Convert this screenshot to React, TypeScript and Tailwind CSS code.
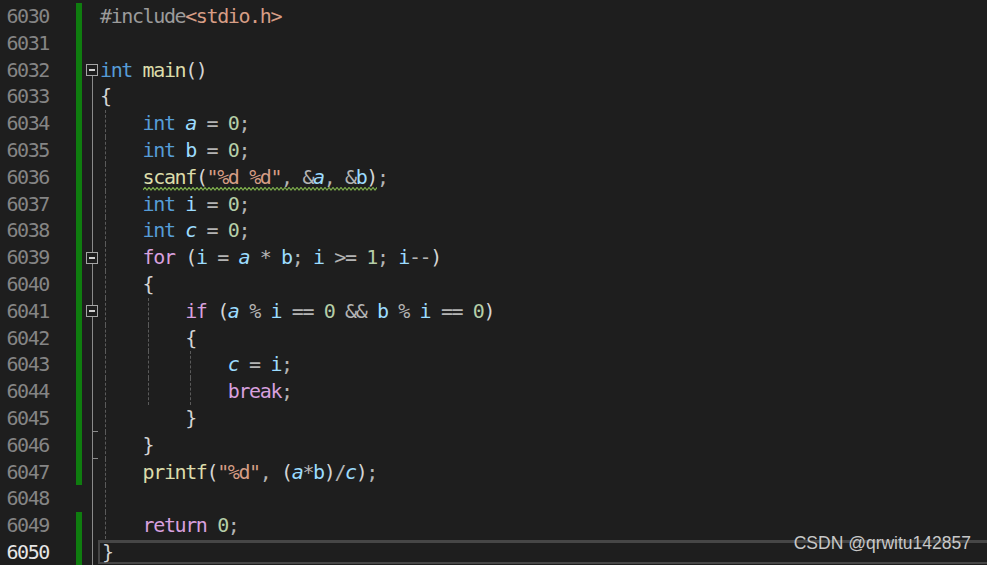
import React from "react";

type Tok = [string, string, boolean?];

const KW = "#569cd6";
const FN = "#dcdcaa";
const VAR = "#9cdcfe";
const NUM = "#b5cea8";
const STR = "#d69d85";
const OP = "#b4b4b4";
const PUN = "#d4d4d4";
const CTL = "#d8a0df";
const PRE = "#9b9b9b";

const sp = (n: number): Tok => [" ".repeat(n), PUN];

const lines: { n: number; toks: Tok[]; changed: boolean }[] = [
  { n: 6030, changed: true, toks: [["#include", PRE], ["<stdio.h>", STR]] },
  { n: 6031, changed: true, toks: [] },
  { n: 6032, changed: true, toks: [["int", KW], [" ", PUN], ["main", FN], ["()", PUN]] },
  { n: 6033, changed: true, toks: [["{", PUN]] },
  { n: 6034, changed: true, toks: [sp(4), ["int", KW], [" ", PUN], ["a", VAR, true], [" = ", OP], ["0", NUM], [";", OP]] },
  { n: 6035, changed: true, toks: [sp(4), ["int", KW], [" ", PUN], ["b", VAR], [" = ", OP], ["0", NUM], [";", OP]] },
  {
    n: 6036,
    changed: true,
    toks: [sp(4), ["scanf", FN], ["(", PUN], ['"%d %d"', STR], [", ", OP], ["&", OP], ["a", VAR, true], [", ", OP], ["&", OP], ["b", VAR], [")", PUN], [";", OP]],
  },
  { n: 6037, changed: true, toks: [sp(4), ["int", KW], [" ", PUN], ["i", VAR], [" = ", OP], ["0", NUM], [";", OP]] },
  { n: 6038, changed: true, toks: [sp(4), ["int", KW], [" ", PUN], ["c", VAR, true], [" = ", OP], ["0", NUM], [";", OP]] },
  {
    n: 6039,
    changed: true,
    toks: [sp(4), ["for", CTL], [" (", PUN], ["i", VAR], [" = ", OP], ["a", VAR, true], [" * ", OP], ["b", VAR], ["; ", OP], ["i", VAR], [" >= ", OP], ["1", NUM], ["; ", OP], ["i", VAR], ["--", OP], [")", PUN]],
  },
  { n: 6040, changed: true, toks: [sp(4), ["{", PUN]] },
  {
    n: 6041,
    changed: true,
    toks: [sp(8), ["if", CTL], [" (", PUN], ["a", VAR, true], [" % ", OP], ["i", VAR], [" == ", OP], ["0", NUM], [" && ", OP], ["b", VAR], [" % ", OP], ["i", VAR], [" == ", OP], ["0", NUM], [")", PUN]],
  },
  { n: 6042, changed: true, toks: [sp(8), ["{", PUN]] },
  { n: 6043, changed: true, toks: [sp(12), ["c", VAR, true], [" = ", OP], ["i", VAR], [";", OP]] },
  { n: 6044, changed: true, toks: [sp(12), ["break", CTL], [";", OP]] },
  { n: 6045, changed: true, toks: [sp(8), ["}", PUN]] },
  { n: 6046, changed: true, toks: [sp(4), ["}", PUN]] },
  {
    n: 6047,
    changed: true,
    toks: [sp(4), ["printf", FN], ["(", PUN], ['"%d"', STR], [", ", OP], ["(", PUN], ["a", VAR, true], ["*", OP], ["b", VAR], [")", PUN], ["/", OP], ["c", VAR, true], [")", PUN], [";", OP]],
  },
  { n: 6048, changed: false, toks: [] },
  { n: 6049, changed: true, toks: [sp(4), ["return", CTL], [" ", PUN], ["0", NUM], [";", OP]] },
  { n: 6050, changed: true, toks: [["}", PUN]] },
];

function FoldMargin({ n }: { n: number }) {
  const hasBox = n === 6032 || n === 6039 || n === 6041;
  const showLine = n >= 6033;
  const tick = n === 6045 || n === 6046;
  return (
    <div className="relative w-[16px] h-full shrink-0">
      {showLine && <div className="absolute left-[10px] top-0 bottom-0 w-px bg-[#8a8a8a]" />}
      {n === 6032 && <div className="absolute left-[10px] top-1/2 bottom-0 w-px bg-[#8a8a8a]" />}
      {tick && <div className="absolute left-[10px] bottom-0 w-[6px] h-px bg-[#8a8a8a]" />}
      {hasBox && (
        <div className="absolute left-[4px] top-1/2 -translate-y-1/2 w-[12px] h-[12px] border border-[#a5a5a5] bg-[#1e1e1e] flex items-center justify-center">
          <div className="w-[6px] h-[2px] bg-[#d0d0d0]" />
        </div>
      )}
    </div>
  );
}

function Guides({ n }: { n: number }) {
  return (
    <>
      {n >= 6034 && n <= 6049 && (
        <div className="absolute left-[7px] top-0 bottom-0 border-l border-dashed border-[#5a5a5a]" />
      )}
      {n >= 6041 && n <= 6044 && (
        <div className="absolute left-[50px] top-0 bottom-0 border-l border-dashed border-[#5a5a5a]" />
      )}
      {n >= 6043 && n <= 6044 && (
        <div className="absolute left-[92px] top-0 bottom-0 border-l border-dashed border-[#5a5a5a]" />
      )}
    </>
  );
}

function Squiggle() {
  let d = "M0 3";
  for (let x = 0; x < 234; x += 4) {
    d += ` L${x + 2} 0.5 L${x + 4} 3`;
  }
  return (
    <svg className="absolute left-[45px] bottom-[-1px]" width="234" height="5" viewBox="0 0 234 5">
      <path d={d} fill="none" stroke="#7fb04c" strokeWidth="1.2" />
    </svg>
  );
}

export default function App() {
  return (
    <div
      className="relative w-[987px] h-[565px] overflow-hidden bg-[#1e1e1e] pt-[3px] text-[20px] tracking-[-1.39px]"
      style={{ fontFamily: '"DejaVu Sans Mono", "Liberation Mono", monospace' }}
    >
      {lines.map((l) => {
        const current = l.n === 6050;
        return (
          <div key={l.n} className="flex h-[26.8px] items-stretch">
            <div
              className={`w-[76px] shrink-0 pr-[27px] text-right leading-[26.8px] ${
                current ? "text-[#e6e6e6]" : "text-[#858585]"
              }`}
            >
              {l.n}
            </div>
            <div className={`w-[6px] shrink-0 ${l.changed ? "bg-[#0f7d0f]" : ""}`} />
            <FoldMargin n={l.n} />
            {current ? (
              <div className="relative flex-1 self-start whitespace-pre pl-[2px] mt-[1px] h-[24px] leading-[19px] border-2 border-t-[3px] border-r-0 border-[#464646]">
                {l.toks.map((t, i) => (
                  <span key={i} style={{ color: t[1] }}>
                    {t[0]}
                  </span>
                ))}
              </div>
            ) : (
              <div className="relative flex-1 whitespace-pre leading-[26.8px] pl-[2px]">
                <Guides n={l.n} />
                {l.toks.map((t, i) => (
                  <span key={i} style={{ color: t[1] }} className={t[2] ? "italic" : ""}>
                    {t[0]}
                  </span>
                ))}
                {l.n === 6036 && <Squiggle />}
              </div>
            )}
          </div>
        );
      })}
      <div
        className="absolute right-[16px] bottom-[9px] text-[17.5px] tracking-normal text-[#c8c8c8]"
        style={{ fontFamily: '"Liberation Sans", Arial, sans-serif' }}
      >
        CSDN @qrwitu142857
      </div>
    </div>
  );
}
